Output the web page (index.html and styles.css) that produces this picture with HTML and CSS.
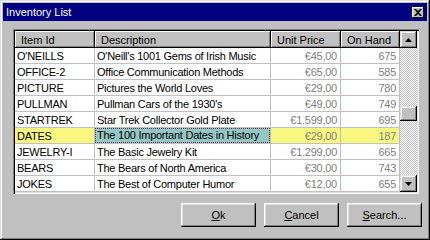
FILE: index.html
```html
<!DOCTYPE html>
<html lang="en">
<head>
  <meta charset="UTF-8">
  <title>Inventory List</title>
  <link rel="stylesheet" href="styles.css">
</head>
<body>
  <div class="window">
    <div class="titlebar">
      <span class="title">Inventory List</span>
      <button class="close" aria-label="Close">
        <svg width="8" height="7" viewBox="0 0 8 7"><path d="M0 0h2l2 2 2-2h2L5 3.5 8 7H6L4 5 2 7H0l3-3.5z" fill="#000"/></svg>
      </button>
    </div>

    <div class="content">
      <div class="grid">
        <table class="items">
          <colgroup>
            <col class="c-id">
            <col class="c-desc">
            <col class="c-price">
            <col class="c-qty">
          </colgroup>
          <thead>
            <tr>
              <th>Item Id</th>
              <th>Description</th>
              <th>Unit Price</th>
              <th>On Hand</th>
            </tr>
          </thead>
          <tbody>
            <tr><td>O'NEILLS</td><td>O'Neill's 1001 Gems of Irish Music</td><td class="num">€45,00</td><td class="num">675</td></tr>
            <tr><td>OFFICE-2</td><td>Office Communication Methods</td><td class="num">€65,00</td><td class="num">585</td></tr>
            <tr><td>PICTURE</td><td>Pictures the World Loves</td><td class="num">€29,00</td><td class="num">780</td></tr>
            <tr><td>PULLMAN</td><td>Pullman Cars of the 1930's</td><td class="num">€49,00</td><td class="num">749</td></tr>
            <tr><td>STARTREK</td><td>Star Trek Collector Gold Plate</td><td class="num">€1.599,00</td><td class="num">695</td></tr>
            <tr class="current"><td>DATES</td><td class="focus"><span>The 100 Important Dates in History</span></td><td class="num">€29,00</td><td class="num">187</td></tr>
            <tr><td>JEWELRY-I</td><td>The Basic Jewelry Kit</td><td class="num">€1.299,00</td><td class="num">665</td></tr>
            <tr><td>BEARS</td><td>The Bears of North America</td><td class="num">€30,00</td><td class="num">743</td></tr>
            <tr><td>JOKES</td><td>The Best of Computer Humor</td><td class="num">€12,00</td><td class="num">655</td></tr>
          </tbody>
        </table>

        <div class="scrollbar">
          <div class="arrow">
            <svg width="7" height="4" viewBox="0 0 7 4"><path d="M3.5 0L7 4H0z" fill="#000"/></svg>
          </div>
          <div class="track">
            <div class="thumb"></div>
          </div>
          <div class="arrow">
            <svg width="7" height="4" viewBox="0 0 7 4"><path d="M0 0h7L3.5 4z" fill="#000"/></svg>
          </div>
        </div>
      </div>

      <div class="actions">
        <button class="btn"><u>O</u>k</button>
        <button class="btn"><u>C</u>ancel</button>
        <button class="btn"><u>S</u>earch...</button>
      </div>
    </div>
  </div>
</body>
</html>
```

FILE: styles.css
```css
body {
  margin: 0;
  font-family: "Liberation Sans", Arial, sans-serif;
  font-size: 11px;
  background: #c0c0c0;
}

.window {
  width: 430px;
  height: 240px;
  box-sizing: border-box;
  padding: 3px;
  background: #c0c0c0;
  box-shadow: inset -1px -1px #000, inset 1px 1px #dfdfdf,
              inset -2px -2px #808080, inset 2px 2px #fff;
}

.titlebar {
  height: 18px;
  padding: 0 3px;
  display: flex;
  align-items: center;
  justify-content: space-between;
  background: #000080;
  color: #fff;
}

.title {
  font-size: 11px;
}

.close {
  width: 12px;
  height: 11px;
  padding: 0;
  border: none;
  display: flex;
  align-items: center;
  justify-content: center;
  background: #c0c0c0;
  box-shadow: inset -1px -1px #000, inset 1px 1px #fff;
}

.content {
  padding: 8px 5px 0 10px;
}

.grid {
  width: 406px;
  box-sizing: border-box;
  padding: 2px;
  display: flex;
  background: #fff;
  box-shadow: inset 1px 1px #808080, inset 2px 2px #000,
              inset -1px -1px #fff, inset -2px -2px #dfdfdf;
}

.items {
  width: 385px;
  table-layout: fixed;
  border-collapse: separate;
  border-spacing: 0;
}

.c-id { width: 80px; }
.c-desc { width: 176px; }
.c-price { width: 70px; }
.c-qty { width: 59px; }

.items th {
  height: 17px;
  padding: 0 6px;
  text-align: left;
  font-weight: normal;
  background: #c0c0c0;
  box-shadow: inset -1px -1px #000, inset 1px 1px #fff, inset -2px -2px #808080;
  white-space: nowrap;
  overflow: hidden;
}

.items td {
  height: 15px;
  padding: 0 2px;
  border-right: 1px solid #c0c0c0;
  border-bottom: 1px solid #c0c0c0;
  letter-spacing: -0.25px;
  white-space: nowrap;
  overflow: hidden;
}

.items td.num {
  text-align: right;
  color: #808080;
  padding-right: 3px;
}

.current td {
  background: #f8f880;
}

.current td.focus {
  background: #94c6c4;
  padding: 0;
}

.focus span {
  display: block;
  height: 13px;
  line-height: 13px;
  padding: 0 1px;
  border: 1px dotted #603050;
}

.scrollbar {
  width: 17px;
  display: flex;
  flex-direction: column;
  background: repeating-conic-gradient(#c0c0c0 0 25%, #fff 0 50%) 0 0 / 2px 2px;
}

.arrow {
  height: 17px;
  display: flex;
  align-items: center;
  justify-content: center;
  background: #c0c0c0;
  box-shadow: inset -1px -1px #000, inset 1px 1px #dfdfdf,
              inset -2px -2px #808080, inset 2px 2px #fff;
}

.track {
  flex: 1;
}

.thumb {
  height: 15px;
  margin-top: 58px;
  background: #c0c0c0;
  box-shadow: inset -1px -1px #000, inset 1px 1px #dfdfdf,
              inset -2px -2px #808080, inset 2px 2px #fff;
}

.actions {
  margin-top: 9px;
  display: flex;
  justify-content: flex-end;
  gap: 8px;
}

.btn {
  width: 75px;
  height: 24px;
  padding: 0;
  border: none;
  font-family: inherit;
  font-size: 11px;
  color: #000;
  background: #c0c0c0;
  box-shadow: inset -1px -1px #000, inset 1px 1px #fff,
              inset -2px -2px #808080, inset 2px 2px #dfdfdf;
}
```
